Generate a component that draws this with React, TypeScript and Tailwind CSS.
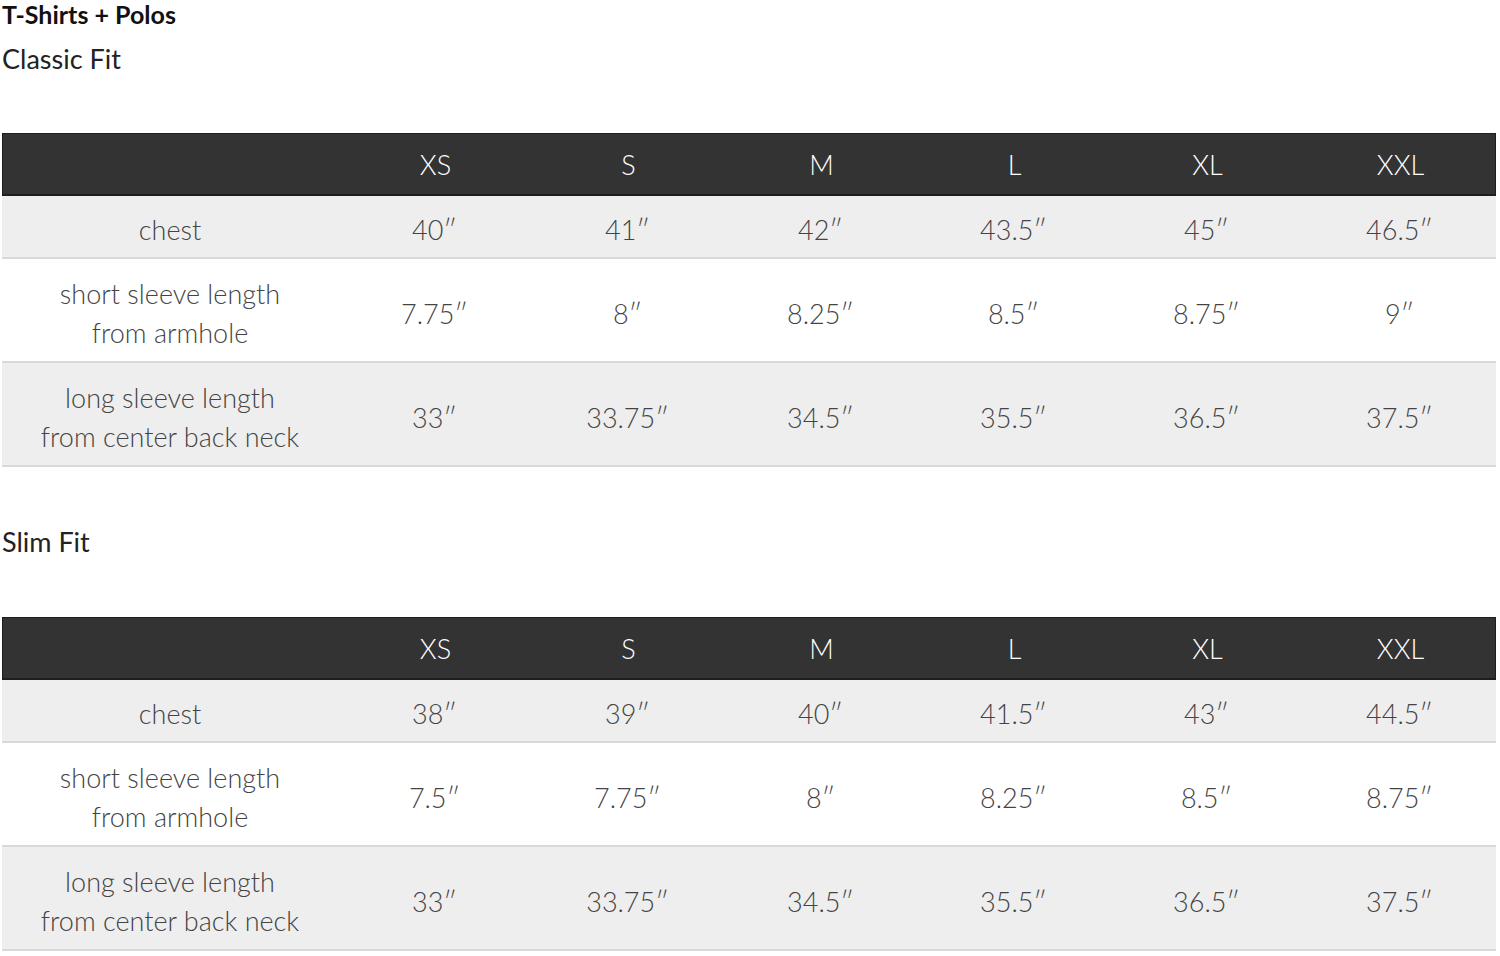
import React from "react";

const sizes = ["XS", "S", "M", "L", "XL", "XXL"];

type Row = { label: string[]; values: string[]; shaded: boolean };

const classic: Row[] = [
  { label: ["chest"], values: ["40″", "41″", "42″", "43.5″", "45″", "46.5″"], shaded: true },
  { label: ["short sleeve length", "from armhole"], values: ["7.75″", "8″", "8.25″", "8.5″", "8.75″", "9″"], shaded: false },
  { label: ["long sleeve length", "from center back neck"], values: ["33″", "33.75″", "34.5″", "35.5″", "36.5″", "37.5″"], shaded: true },
];

const slim: Row[] = [
  { label: ["chest"], values: ["38″", "39″", "40″", "41.5″", "43″", "44.5″"], shaded: true },
  { label: ["short sleeve length", "from armhole"], values: ["7.5″", "7.75″", "8″", "8.25″", "8.5″", "8.75″"], shaded: false },
  { label: ["long sleeve length", "from center back neck"], values: ["33″", "33.75″", "34.5″", "35.5″", "36.5″", "37.5″"], shaded: true },
];

function SizeTable({ rows }: { rows: Row[] }) {
  return (
    <div className="w-[1494px]">
      <div className="grid grid-cols-[336px_repeat(6,193px)] h-[63px] pt-[2px] items-center bg-[#333333] border border-[#1e1e1e] border-b-2 text-white text-[27px]">
        <div />
        {sizes.map((s) => (
          <div key={s} className="text-center">
            {s}
          </div>
        ))}
      </div>
      {rows.map((r, i) => (
        <div
          key={i}
          className={`grid grid-cols-[336px_repeat(6,193px)] items-center pt-[6px] text-[#444444] text-[27px] leading-[39px] border-b-2 border-[#d9d9d9] ${
            r.shaded ? "bg-[#eeeeee]" : "bg-white"
          } ${r.label.length > 1 ? "h-[104px]" : "h-[63px]"}`}
        >
          <div className="text-center">
            {r.label.map((l, j) => (
              <div key={j}>{l}</div>
            ))}
          </div>
          {r.values.map((v, j) => (
            <div key={j} className="text-center">
              {v}
            </div>
          ))}
        </div>
      ))}
    </div>
  );
}

export default function App() {
  return (
    <div
      className="w-[1500px] h-[956px] overflow-hidden bg-white pl-[2px]"
      style={{ fontFamily: "Lato, 'Liberation Sans', sans-serif", fontWeight: 300 }}
    >
      <div className="-mt-[1px] text-[25px] leading-[30px] font-bold text-[#111]">T-Shirts + Polos</div>
      <div className="mt-[15px] text-[27px] leading-[30px] text-[#222] font-normal">Classic Fit</div>
      <div className="mt-[59px]">
        <SizeTable rows={classic} />
      </div>
      <div className="mt-[60px] text-[27px] leading-[30px] text-[#222] font-normal">Slim Fit</div>
      <div className="mt-[60px]">
        <SizeTable rows={slim} />
      </div>
    </div>
  );
}
